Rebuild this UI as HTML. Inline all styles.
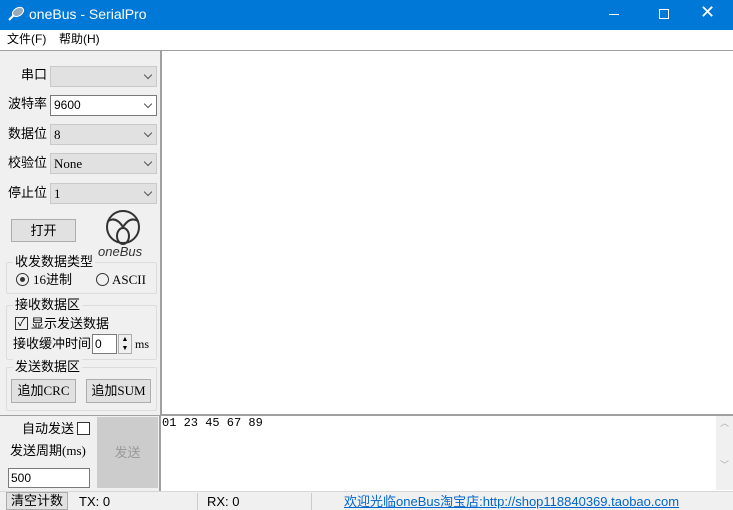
<!DOCTYPE html><html><head><meta charset="utf-8"><style>
*{box-sizing:border-box;margin:0;padding:0}
body{width:733px;height:510px;position:relative;background:#f0f0f0;font-family:"Liberation Sans","Noto Sans CJK SC",sans-serif;font-size:12px;line-height:15px;color:#000;overflow:hidden}
.a{position:absolute}
.sel{position:absolute;left:50px;width:107px;height:21px;background:#e1e1e1;border:1px solid #c9c9c9;font-family:"Liberation Serif","Noto Sans CJK SC",serif;font-size:13px;line-height:19px;padding-left:3px}
.sel::after{content:"";position:absolute;right:5px;top:5px;width:5px;height:5px;border-right:1px solid #555;border-bottom:1px solid #555;transform:rotate(45deg)}
.lbl{position:absolute;font-size:13px}
.btn{position:absolute;background:#e1e1e1;border:1px solid #adadad;text-align:center;font-size:13px}
.grp{position:absolute;border:1px solid #dcdcdc;border-radius:2px}
.gt{position:absolute;background:#f0f0f0;font-size:13px;padding:0 2px}
.sf{font-family:"Liberation Serif","Noto Sans CJK SC",serif}
</style></head><body>
<div class="a" style="left:0;top:0;width:733px;height:30px;background:#0078d7;color:#fff">
<svg class="a" style="left:7px;top:6px" width="18" height="16"><ellipse cx="11" cy="6" rx="6" ry="4" fill="#9ab" stroke="#fff" transform="rotate(-30 11 6)"/><line x1="7" y1="9" x2="2" y2="14" stroke="#fff" stroke-width="2"/></svg>
<div class="a" style="left:29px;top:7px;font-size:14px">oneBus - SerialPro</div>
<div class="a" style="left:609px;top:14px;width:10px;height:1px;background:#fff"></div>
<div class="a" style="left:659px;top:9px;width:10px;height:10px;border:1px solid #fff"></div>
<div class="a" style="left:700px;top:5px;font-size:18px">✕</div>
</div>
<div class="a" style="left:0;top:30px;width:733px;height:20px;background:#fff"><span class="a" style="left:7px;top:2px">文件(F)</span><span class="a" style="left:59px;top:2px">帮助(H)</span></div>
<div class="a" style="left:0;top:50px;width:161px;height:365px;border-top:1px solid #a0a0a0;border-right:1px solid #a0a0a0"></div>
<div class="a" style="left:161px;top:50px;width:572px;height:365px;background:#fff;border:1px solid #a0a0a0;border-right:none"></div>
<div class="lbl" style="left:21px;top:67px">串口</div><div class="sel" style="top:66px"></div>
<div class="lbl" style="left:8px;top:96px">波特率</div><div class="sel" style="top:95px;background:#fff;border-color:#7a7a7a;font-family:'Liberation Sans',sans-serif;font-size:12px">9600</div>
<div class="lbl" style="left:8px;top:126px">数据位</div><div class="sel" style="top:124px">8</div>
<div class="lbl" style="left:8px;top:155px">校验位</div><div class="sel" style="top:153px">None</div>
<div class="lbl" style="left:8px;top:185px">停止位</div><div class="sel" style="top:183px">1</div>
<div class="btn" style="left:11px;top:219px;width:65px;height:23px;line-height:21px">打开</div>
<svg class="a" style="left:104px;top:208px" width="38" height="38" fill="none" stroke="#333" stroke-width="2"><circle cx="19" cy="19" r="16"/><path d="M4 13 Q12 8 19 19 Q26 8 34 13"/><ellipse cx="19" cy="28" rx="6" ry="8"/></svg>
<div class="a" style="left:98px;top:244px;font-size:13px;font-style:italic;color:#333">oneBus</div>
<div class="grp" style="left:6px;top:262px;width:151px;height:32px"></div><div class="gt" style="left:13px;top:254px">收发数据类型</div>
<div class="a" style="left:16px;top:273px;width:13px;height:13px;border:1px solid #333;border-radius:50%"><div class="a" style="left:3px;top:3px;width:5px;height:5px;background:#333;border-radius:50%"></div></div>
<div class="a sf" style="left:33px;top:272px;font-size:13px">16进制</div>
<div class="a" style="left:96px;top:273px;width:13px;height:13px;border:1px solid #333;border-radius:50%"></div>
<div class="a sf" style="left:112px;top:272px;font-size:13px">ASCII</div>
<div class="grp" style="left:6px;top:305px;width:151px;height:55px"></div><div class="gt" style="left:13px;top:297px">接收数据区</div>
<div class="a" style="left:15px;top:317px;width:13px;height:13px;border:1px solid #333;font-size:11px;line-height:11px;text-align:center">✓</div>
<div class="a" style="left:31px;top:316px;font-size:13px">显示发送数据</div>
<div class="a" style="left:13px;top:336px;font-size:13px">接收缓冲时间</div>
<div class="a" style="left:92px;top:334px;width:25px;height:20px;background:#fff;border:1px solid #7a7a7a;padding-left:2px;line-height:18px">0</div>
<div class="a" style="left:118px;top:334px;width:14px;height:20px;border:1px solid #adadad;font-size:7px;line-height:9px;text-align:center">▲<br>▼</div>
<div class="a sf" style="left:135px;top:337px;font-size:12px">ms</div>
<div class="grp" style="left:6px;top:367px;width:151px;height:44px"></div><div class="gt" style="left:13px;top:359px">发送数据区</div>
<div class="btn sf" style="left:11px;top:379px;width:65px;height:24px;line-height:22px">追加CRC</div>
<div class="btn sf" style="left:86px;top:379px;width:65px;height:24px;line-height:22px">追加SUM</div>
<div class="a" style="left:0;top:415px;width:160px;height:76px;border-top:1px solid #a0a0a0;border-right:1px solid #a0a0a0"></div>
<div class="a" style="left:22px;top:421px;font-size:13px">自动发送</div>
<div class="a" style="left:77px;top:422px;width:13px;height:13px;border:1px solid #333;background:#fff"></div>
<div class="a sf" style="left:10px;top:443px;font-size:13px">发送周期(ms)</div>
<div class="a" style="left:8px;top:468px;width:82px;height:20px;background:#fff;border:1px solid #7a7a7a;padding-left:2px;line-height:18px">500</div>
<div class="a" style="left:97px;top:417px;width:61px;height:71px;background:#cccccc;color:#999;text-align:center;line-height:71px;font-size:13px">发送</div>
<div class="a" style="left:160px;top:415px;width:573px;height:76px;background:#fff;border-top:1px solid #a0a0a0;border-left:1px solid #a0a0a0"></div>
<div class="a" style="left:162px;top:416px;font-family:'Liberation Mono',monospace;font-size:12px">01 23 45 67 89</div>
<div class="a" style="left:716px;top:416px;width:17px;height:74px;background:#f0f0f0;color:#aaa;font-size:9px;text-align:center;line-height:14px">︿<br><br><br>﹀</div>
<div class="a" style="left:0;top:491px;width:733px;height:19px;background:#f0f0f0;border-top:1px solid #d7d7d7"></div>
<div class="btn" style="left:6px;top:492px;width:62px;height:18px;line-height:16px">清空计数</div>
<div class="a" style="left:79px;top:494px;font-size:13px">TX: 0</div>
<div class="a" style="left:197px;top:493px;width:1px;height:17px;background:#ccc"></div>
<div class="a" style="left:207px;top:494px;font-size:13px">RX: 0</div>
<div class="a" style="left:311px;top:493px;width:1px;height:17px;background:#ccc"></div>
<div class="a" style="left:344px;top:494px;font-size:13px;color:#0066cc;text-decoration:underline">欢迎光临oneBus淘宝店:http://shop118840369.taobao.com</div>
</body></html>
